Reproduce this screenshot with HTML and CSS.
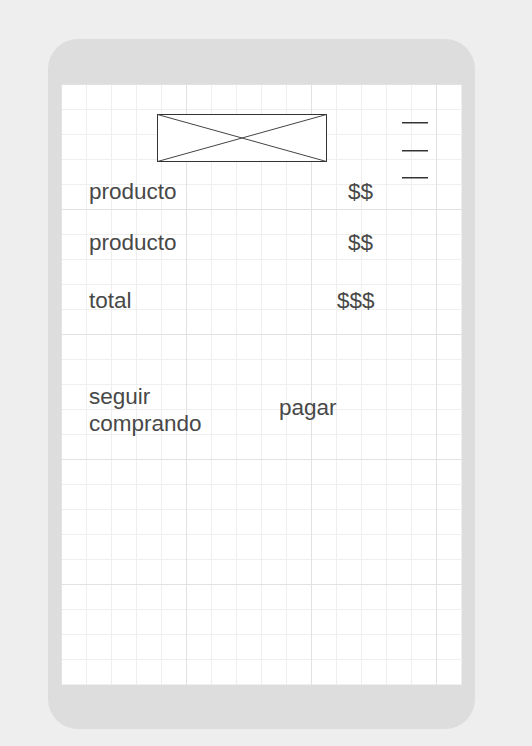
FILE: index.html
```html
<!DOCTYPE html>
<html lang="es">
<head>
<meta charset="utf-8">
<title>Carrito</title>
<link rel="stylesheet" href="styles.css">
</head>
<body>
<div class="phone">
  <div class="screen">
    <div class="header">
      <svg class="placeholder" width="171" height="49" viewBox="0 0 171 49">
        <rect x="0.5" y="0.5" width="169" height="47" fill="#fff" stroke="#333" stroke-width="1"/>
        <line x1="0.5" y1="0.5" x2="169.5" y2="47.5" stroke="#444" stroke-width="1"/>
        <line x1="0.5" y1="47.5" x2="169.5" y2="0.5" stroke="#444" stroke-width="1"/>
      </svg>
      <div class="menu">
        <span class="menu-line"></span>
        <span class="menu-line"></span>
        <span class="menu-line"></span>
      </div>
    </div>
    <div class="rows">
      <div class="row">
        <span class="label">producto</span>
        <span class="price price-item">$$</span>
      </div>
      <div class="row row-second">
        <span class="label">producto</span>
        <span class="price price-item">$$</span>
      </div>
      <div class="row row-total">
        <span class="label">total</span>
        <span class="price">$$$</span>
      </div>
    </div>
    <div class="actions">
      <span class="action-left">seguir comprando</span>
      <span class="action-right">pagar</span>
    </div>
  </div>
</div>
</body>
</html>
```

FILE: styles.css
```css
html, body {
  margin: 0;
  padding: 0;
}

body {
  background: #eeeeee;
  font-family: "Liberation Sans", Arial, sans-serif;
  color: #484848;
}

.phone {
  margin: 39px 0 0 48px;
  width: 427px;
  height: 690px;
  box-sizing: border-box;
  padding: 45px 13px 44px 13px;
  background: #dddddd;
  border-radius: 30px;
}

.screen {
  width: 401px;
  height: 601px;
  box-sizing: border-box;
  padding-left: 28px;
  background-color: #ffffff;
  background-image:
    linear-gradient(to right, #e2e2e2 1px, transparent 1px),
    linear-gradient(to bottom, #e2e2e2 1px, transparent 1px),
    linear-gradient(to right, #efefef 1px, transparent 1px),
    linear-gradient(to bottom, #efefef 1px, transparent 1px);
  background-size: 125px 125px, 125px 125px, 25px 25px, 25px 25px;
  display: flex;
  flex-direction: column;
}

.header {
  display: flex;
  align-items: flex-start;
  height: 94px;
}

.placeholder {
  display: block;
  margin: 30px 0 0 68px;
}

.menu {
  margin: 38px 0 0 74px;
  width: 26px;
  height: 56px;
  display: flex;
  flex-direction: column;
  justify-content: space-between;
}

.menu-line {
  display: block;
  height: 1px;
  background: #333333;
  box-shadow: 0 1px 0 #9a9a9a;
}

.rows {
  display: flex;
  flex-direction: column;
}

.row {
  display: flex;
  font-size: 22.5px;
  line-height: 27px;
}

.row-second {
  margin-top: 24px;
}

.row-total {
  margin-top: 31px;
}

.label {
  width: 248px;
}

.price-item {
  margin-left: 11px;
}

.actions {
  margin-top: 69px;
  display: flex;
  align-items: center;
  font-size: 22.5px;
  line-height: 27px;
}

.action-left {
  width: 150px;
  margin-right: 40px;
}

.action-right {
  margin-bottom: 6px;
}
```
